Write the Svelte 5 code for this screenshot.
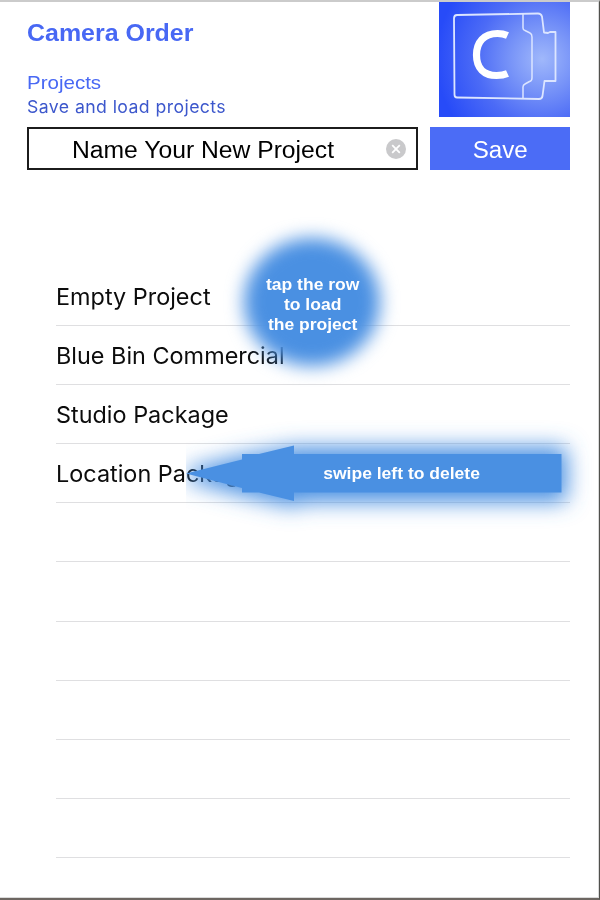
<script>
  const projects = ['Empty Project', 'Blue Bin Commercial', 'Studio Package', 'Location Package', '', '', '', '', '', ''];
</script>

<main class="screen">
  <header>
    <div class="titles">
      <h1><span>Camera Order</span></h1>
      <h2><span>Projects</span></h2>
      <p><span>Save and load projects</span></p>
    </div>
    <svg class="logo" viewBox="0 0 131 115" width="131" height="115">
      <defs>
        <radialGradient id="glow" gradientUnits="userSpaceOnUse" cx="103" cy="57" r="106">
          <stop offset="0" stop-color="#a0b8fb" />
          <stop offset="0.3" stop-color="#7894f8" />
          <stop offset="0.62" stop-color="#4c6bf6" />
          <stop offset="1" stop-color="#274bf8" />
        </radialGradient>
      </defs>
      <rect width="131" height="115" fill="url(#glow)" />
      <g fill="none" stroke="#dce5ff" stroke-width="1.8" stroke-linejoin="round">
        <path d="M18 13L99 11.5Q102 11.5 103 14.5L105 30.5L109 31L111 30H116.500V79H105.500L103.500 94Q103 97 100 97L18 95.500Q15.500 95.500 15.500 92.500L15 16.500Q15 13 18 13Z" />
        <path d="M84 12V26Q84 28 86 28.500L91 31Q93 32 93 35V76Q93 79 90.500 79.500L86 82Q84 83 84 85V96.500" stroke-width="1.500" />
      </g>
      <path d="M68.500 33.500Q64 31.500 58.500 31.500C45 31.500 37.500 40 37.500 53C37.500 66 45 73.500 57.500 73.500Q64 73.500 68.500 71.500" fill="none" stroke="#fff" stroke-width="7.200" />
    </svg>
  </header>

  <section class="form">
    <div class="field">
      <span class="name">Name Your New Project</span>
      <svg class="clear" viewBox="0 0 20 20" width="21" height="20">
        <circle cx="10" cy="10" r="10" fill="#c9c9cb" />
        <path d="M6.200 6.200L13.800 13.800M13.800 6.200L6.200 13.800" stroke="#fff" stroke-width="1.800" />
      </svg>
    </div>
    <button><span>Save</span></button>
  </section>

  <ul>
    {#each projects as name}
      <li><span>{name}</span></li>
    {/each}
  </ul>

  <div class="tap">
    <div class="disc"></div>
    <div class="hint">tap the row<br />to load<br />the project</div>
  </div>

  <div class="swipe">
    <svg viewBox="0 0 414 130" width="414" height="130">
      <defs>
        <filter id="soft" filterUnits="userSpaceOnUse" x="0" y="0" width="414" height="130">
          <feGaussianBlur stdDeviation="11" />
        </filter>
      </defs>
      <path d="M6 56L56 43L108 34H375V77H108V82L56 70Z" fill="#4a90e2" stroke="#4a90e2" stroke-width="12" stroke-linejoin="round" filter="url(#soft)" />
      <path d="M0 54.500L56 40.500V35H73L108 26.500V35H375.500V73.500H108V82L73 73.500H56V69Z" fill="#4a90e2" />
    </svg>
    <div class="hint">swipe left to delete</div>
  </div>
</main>

<style>
  .screen {
    position: relative;
    box-sizing: border-box;
    width: 600px;
    height: 900px;
    padding: 0 29px 0 27px;
    border-top: 2px solid #cbcbcb;
    border-right: 1px solid #50504c;
    border-bottom: 2px solid #6d6661;
    box-shadow: inset -1px -1px #dadada;
    background: #fff;
    overflow: hidden;
    font-family: 'Liberation Sans', Arial, sans-serif;
    white-space: nowrap;
  }
  span, .hint { display: inline-block; }
  header { display: flex; justify-content: space-between; height: 125px; }
  h1, h2, p { margin: 0; font-weight: 400; }
  h1 span, h2 span, p span { transform-origin: left; }
  h1 { padding-top: 16px; height: 32px; line-height: 31px; font-size: 23px; font-weight: 700; color: #4868f4; }
  h1 span { transform: scaleX(1.085); }
  h2 { padding-top: 20px; height: 24px; line-height: 26px; font-size: 19px; color: #4868f4; }
  h2 span { transform: scaleX(1.08); }
  p { font: 17.500px/25px Inter, sans-serif; letter-spacing: 0.4px; color: #3c57cc; }
  p span { transform: scaleX(1.01); }
  .form { display: flex; gap: 11.5px; height: 43px; }
  .field {
    box-sizing: border-box;
    width: 391px;
    border: 2px solid #1c1c1c;
    display: flex;
    align-items: center;
    justify-content: space-between;
    padding: 0 9px 0 43px;
    font-size: 23px;
  }
  .name { transform: scaleX(1.073); transform-origin: left; padding-top: 3px; }
  .clear { transform: translateX(-0.5px); }
  button { flex: 1; border: 0; padding: 3px 0 0; background: #4b6cf6; color: #fff; font: 23px 'Liberation Sans', sans-serif; }
  button span { transform: scaleX(1.05); }
  ul { list-style: none; margin: 97px 0 0 29px; padding: 0; font: 23px Inter, sans-serif; color: #0c0c0c; }
  li { box-sizing: border-box; height: 59.1px; line-height: 60px; border-bottom: 1px solid #dfdfe1; }
  li span { transform: scaleX(1.018); transform-origin: left; }
  .hint { position: relative; color: #fff; font-weight: 700; font-size: 16px; line-height: 19.700px; text-align: center; transform: scaleX(1.095); }
  .tap { position: absolute; left: 233px; top: 219px; width: 160px; height: 160px; display: flex; align-items: center; justify-content: center; padding-top: 8px; box-sizing: border-box; }
  .disc { position: absolute; left: 11px; top: 17px; width: 136px; height: 128px; border-radius: 50%; background: #4a90e2; filter: blur(9px); }
  .swipe { position: absolute; left: 186px; top: 417px; width: 414px; height: 110px; display: flex; align-items: center; justify-content: center; }
  .swipe svg { position: absolute; left: 0; top: 0; }
  .swipe .hint { top: 0; left: 8.500px; }
</style>
